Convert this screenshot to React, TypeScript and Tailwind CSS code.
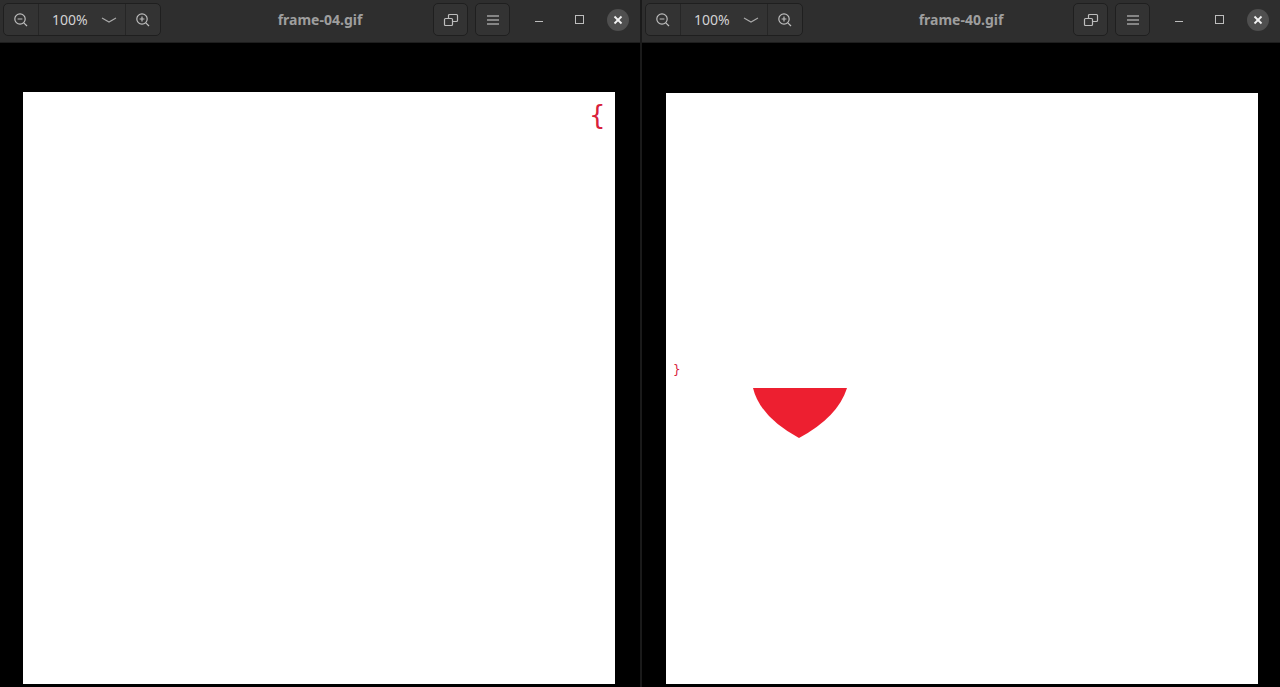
import React from "react";

const ZoomOut = () => (
  <svg width="16" height="16" viewBox="0 0 16 16" fill="none" stroke="#bdbdbd" strokeWidth="1.2">
    <circle cx="7" cy="7" r="5.2" />
    <line x1="4.6" y1="7" x2="9.4" y2="7" />
    <line x1="10.8" y1="10.8" x2="14" y2="14" />
  </svg>
);
const ZoomIn = () => (
  <svg width="16" height="16" viewBox="0 0 16 16" fill="none" stroke="#bdbdbd" strokeWidth="1.2">
    <circle cx="7" cy="7" r="5.2" />
    <line x1="4.6" y1="7" x2="9.4" y2="7" />
    <line x1="7" y1="4.6" x2="7" y2="9.4" />
    <line x1="10.8" y1="10.8" x2="14" y2="14" />
  </svg>
);
const Chevron = () => (
  <svg width="16" height="10" viewBox="0 0 16 10" fill="none" stroke="#a8a8a8" strokeWidth="1.2">
    <polyline points="1,3 8,7 15,3" />
  </svg>
);
const Restore = () => (
  <svg width="16" height="16" viewBox="0 0 16 16" fill="none" stroke="#bdbdbd" strokeWidth="1.2">
    <rect x="5.5" y="2.5" width="9" height="7" rx="1" />
    <rect x="1.5" y="6.5" width="8" height="7" rx="1" fill="#333333" />
  </svg>
);
const Menu = () => (
  <svg width="14" height="12" viewBox="0 0 14 12" fill="none" stroke="#bdbdbd" strokeWidth="1.2">
    <line x1="1" y1="2" x2="13" y2="2" />
    <line x1="1" y1="6" x2="13" y2="6" />
    <line x1="1" y1="10" x2="13" y2="10" />
  </svg>
);

function TitleBar({ title }: { title: string }) {
  return (
    <div className="h-[43px] shrink-0 bg-[#2e2e2e] border-b border-[#1e1e1e] grid grid-cols-[1fr_auto_1fr] items-start pt-[3px]">
      <div className="flex pl-[3px]">
        <div className="flex h-[33px] rounded-[5px] border border-[#1f1f1f] bg-[#333333] overflow-hidden">
          <div className="w-[35px] flex items-center justify-center border-r border-[#262626]">
            <ZoomOut />
          </div>
          <div className="w-[87px] flex items-center justify-between pl-[13px] pr-[8px] border-r border-[#262626]">
            <span className="text-[14px] text-[#d2d2d2]" style={{ fontFamily: '"Noto Sans", "DejaVu Sans", sans-serif' }}>100%</span>
            <Chevron />
          </div>
          <div className="w-[34px] flex items-center justify-center">
            <ZoomIn />
          </div>
        </div>
      </div>
      <div className="h-[33px] flex items-center">
        <span className="text-[14px] font-bold text-[#9e9e9e]" style={{ fontFamily: '"Noto Sans", "DejaVu Sans", sans-serif' }}>{title}</span>
      </div>
      <div className="flex items-center justify-end h-[33px] pr-[11px]">
        <div className="w-[35px] h-[33px] rounded-[5px] border border-[#1f1f1f] bg-[#333333] flex items-center justify-center">
          <Restore />
        </div>
        <div className="ml-[7px] w-[35px] h-[33px] rounded-[5px] border border-[#1f1f1f] bg-[#333333] flex items-center justify-center">
          <Menu />
        </div>
        <div className="ml-[19px] w-[20px] flex items-center justify-center">
          <div className="w-[8px] h-[1.5px] bg-[#bdbdbd] mt-[4px]" />
        </div>
        <div className="ml-[20px] w-[20px] flex items-center justify-center">
          <div className="w-[9px] h-[9px] border border-[#bdbdbd]" />
        </div>
        <div className="ml-[18px] w-[22px] h-[22px] rounded-full bg-[#4f4f4f] flex items-center justify-center">
          <svg width="10" height="10" viewBox="0 0 10 10" stroke="#f2f2f2" strokeWidth="1.8">
            <line x1="1.5" y1="1.5" x2="8.5" y2="8.5" />
            <line x1="8.5" y1="1.5" x2="1.5" y2="8.5" />
          </svg>
        </div>
      </div>
    </div>
  );
}

export default function App() {
  return (
    <div className="w-[1280px] h-[687px] flex bg-black overflow-hidden">
      <div className="w-[640px] flex flex-col">
        <TitleBar title="frame-04.gif" />
        <div className="flex-1 bg-black pl-[23px] pt-[49px]">
          <div className="relative w-[592px] h-[592px] bg-white">
            <span
              className="absolute left-[566px] top-[10px] text-[26px] leading-none text-[#d8203a]"
              style={{ fontFamily: '"DejaVu Sans", sans-serif' }}
            >
              {"{"}
            </span>
          </div>
        </div>
      </div>
      <div className="w-[2px] bg-[#1a1a1a]" />
      <div className="flex-1 flex flex-col">
        <TitleBar title="frame-40.gif" />
        <div className="flex-1 bg-black pl-[24px] pt-[50px]">
          <div className="relative w-[592px] h-[591px] bg-white">
            <span
              className="absolute left-[7px] top-[271px] text-[12px] leading-none text-[#d8203a]"
              style={{ fontFamily: '"DejaVu Sans", sans-serif' }}
            >
              {"}"}
            </span>
            <svg className="absolute left-0 top-0" width="592" height="591" viewBox="0 0 592 591">
              <path d="M87 295 L181 295 Q172 324 133 345 Q94 324 87 295 Z" fill="#ed1f30" />
            </svg>
          </div>
        </div>
      </div>
    </div>
  );
}
